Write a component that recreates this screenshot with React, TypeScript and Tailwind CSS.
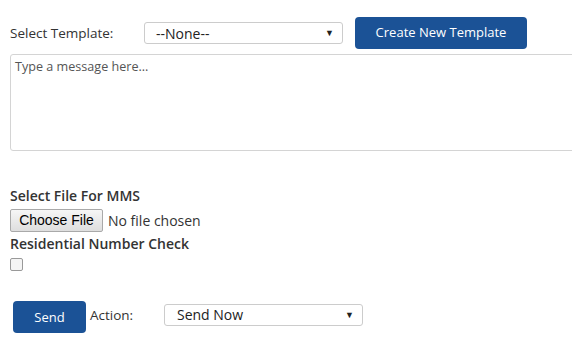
import React from 'react';

const Caret: React.FC = () => (
  <span className="absolute right-[8px] top-1/2 -translate-y-1/2 text-[9px] text-[#222] pointer-events-none">▼</span>
);

const App: React.FC = () => {
  return (
    <div className="w-[572px] h-[352px] overflow-hidden bg-white pl-[10px] font-['Open_Sans',sans-serif] text-[#333]">
      <div className="flex items-center mt-[17px] h-[32px]">
        <label className="w-[134px] text-[13.5px]">Select Template:</label>
        <div className="relative w-[199px] h-[22px] border border-[#ccc] rounded-[3px] flex items-center pl-[11px] text-[14px] text-[#222]">
          --None--
          <Caret />
        </div>
        <button className="ml-[12px] w-[172px] h-[32px] rounded-[4px] bg-[#1b5296] text-white text-[13px]">
          Create New Template
        </button>
      </div>

      <div className="mt-[5px] w-[600px] h-[97px] border border-[#d4d4d4] rounded-[3px] px-[4px] pt-[3px] text-[12.6px] text-[#555]">
        Type a message here...
      </div>

      <div className="mt-[37px] text-[14px] font-semibold leading-[16px]">Select File For MMS</div>
      <div className="flex items-center mt-[4px] h-[24px]">
        <button className="h-[23px] w-[93px] border border-[#a9a9a9] rounded-[2px] bg-gradient-to-b from-[#f6f6f6] to-[#dedede] font-['Liberation_Sans',sans-serif] text-[14px] text-black">
          Choose File
        </button>
        <span className="ml-[5px] text-[14px]">No file chosen</span>
      </div>
      <div className="mt-[4px] text-[14px] font-semibold leading-[16px]">Residential Number Check</div>
      <div className="mt-[6px] w-[13px] h-[13px] border border-[#999] rounded-[2px] bg-[#f4f4f4]"></div>

      <div className="flex items-center mt-[30px] ml-[3px]">
        <button className="w-[73px] h-[32px] rounded-[4px] bg-[#1b5296] text-white text-[13px] pt-[2px]">Send</button>
        <span className="ml-[4px] w-[74px] text-[13.5px] -mt-[3px]">Action:</span>
        <div className="relative w-[199px] h-[22px] border border-[#ccc] rounded-[3px] flex items-center pl-[12px] text-[14px] text-[#222] -mt-[5px]">
          Send Now
          <Caret />
        </div>
      </div>
    </div>
  );
};

export default App;
